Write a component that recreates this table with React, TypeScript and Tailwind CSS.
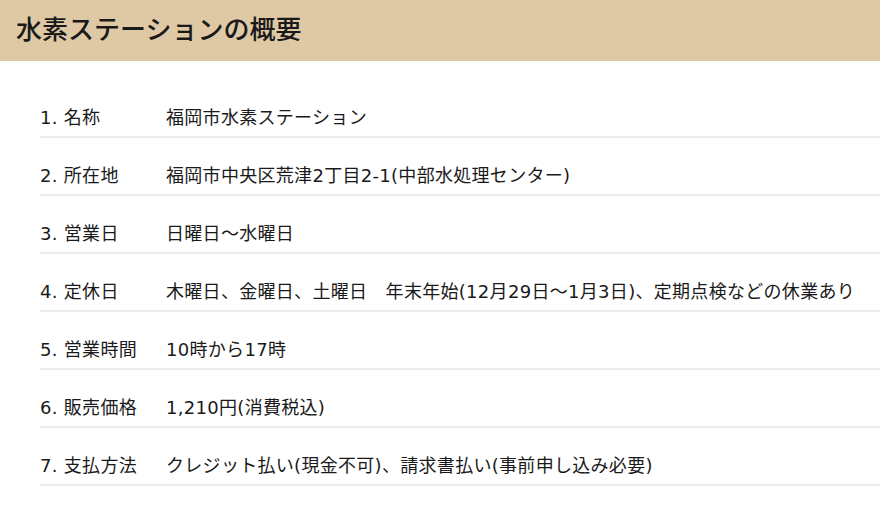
const rows: [string, string][] = [
  ["1. 名称", "福岡市水素ステーション"],
  ["2. 所在地", "福岡市中央区荒津2丁目2-1(中部水処理センター)"],
  ["3. 営業日", "日曜日～水曜日"],
  ["4. 定休日", "木曜日、金曜日、土曜日　年末年始(12月29日～1月3日)、定期点検などの休業あり"],
  ["5. 営業時間", "10時から17時"],
  ["6. 販売価格", "1,210円(消費税込)"],
  ["7. 支払方法", "クレジット払い(現金不可)、請求書払い(事前申し込み必要)"],
];

export default function App() {
  return (
    <div
      className="w-[880px] h-[508px] bg-white text-[#1a1a1a] overflow-hidden"
      style={{ fontFamily: '"DejaVu Sans", "Noto Sans CJK JP", sans-serif' }}
    >
      <div className="h-[61px] bg-[#dfc9a5] flex items-center pl-4">
        <h2 className="text-[26px] font-medium">水素ステーションの概要</h2>
      </div>
      <div className="pt-[19px] pl-10">
        {rows.map(([label, value]) => (
          <div
            key={label}
            className="flex pt-[24px] pb-[5px] border-b-2 border-[#ececec] text-[18px] leading-[27px] tracking-[0.3px]"
          >
            <div className="w-[126px] shrink-0">{label}</div>
            <div className="whitespace-nowrap">{value}</div>
          </div>
        ))}
      </div>
    </div>
  );
}
